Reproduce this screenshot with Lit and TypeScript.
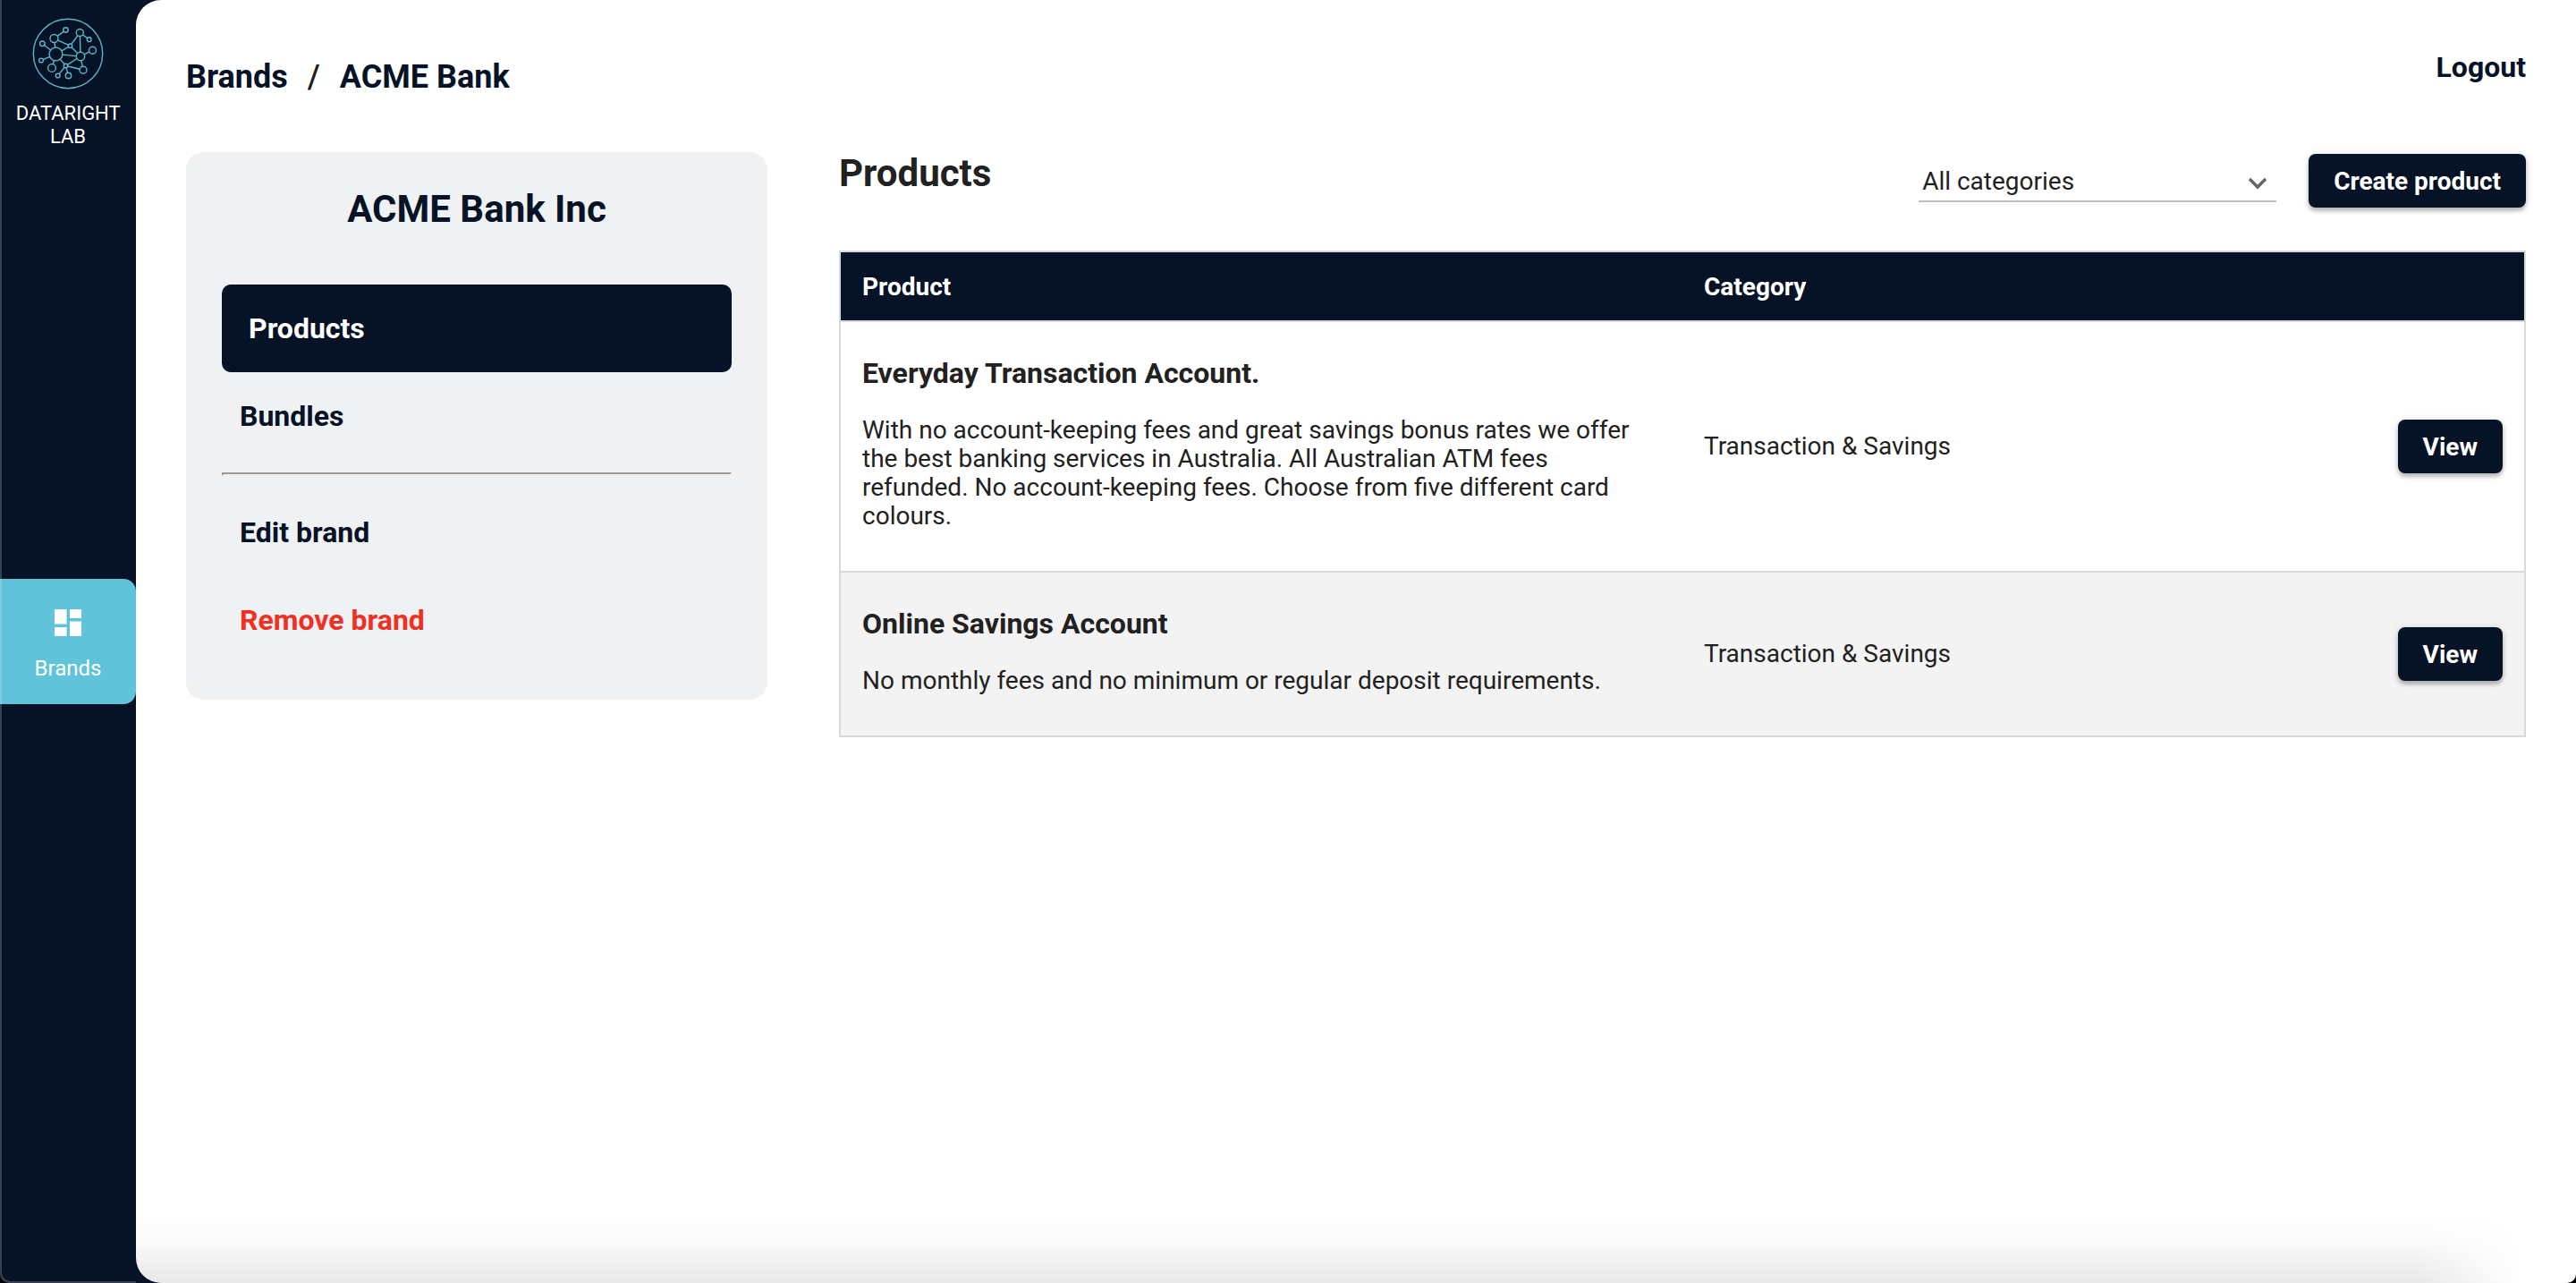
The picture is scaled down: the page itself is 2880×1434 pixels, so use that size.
import { LitElement, html, css, svg } from "lit";
import { customElement, property, state } from "lit/decorators.js";
import { classMap } from "lit/directives/class-map.js";

interface Product {
  name: string;
  description: string;
  category: string;
}

const PRODUCTS: Product[] = [
  {
    name: "Everyday Transaction Account.",
    description:
      "With no account-keeping fees and great savings bonus rates we offer the best banking services in Australia. All Australian ATM fees refunded. No account-keeping fees. Choose from five different card colours.",
    category: "Transaction & Savings",
  },
  {
    name: "Online Savings Account",
    description: "No monthly fees and no minimum or regular deposit requirements.",
    category: "Transaction & Savings",
  },
];

/* Network nodes of the logo: centre x, centre y, radius. */
const NODES: [number, number, number][] = [
  [60.5, 42.5, 4.5],
  [73.5, 33, 2.7],
  [89.3, 36, 4],
  [99.7, 43.7, 2.4],
  [78.5, 50.7, 2.2],
  [47.3, 48.3, 2.8],
  [62.5, 60, 7.4],
  [103.5, 55.7, 4],
  [90, 62.5, 4.7],
  [46, 67, 2.4],
  [58, 75.5, 4.4],
  [73.5, 73, 2.2],
  [93, 77.7, 4],
  [76.5, 84, 3.2],
  [64.7, 84, 2.4],
];

const LINKS: [number, number][] = [
  [0, 1], [0, 4], [0, 6], [2, 3], [2, 4], [2, 8], [4, 6], [4, 8], [5, 6],
  [6, 8], [6, 9], [6, 10], [6, 11], [8, 7], [8, 11], [8, 12], [11, 12],
  [11, 13], [11, 14],
];

/* A link runs from rim to rim, so that the nodes stay hollow. */
const linkLine = ([a, b]: [number, number]) => {
  const [x1, y1, r1] = NODES[a];
  const [x2, y2, r2] = NODES[b];
  const d = Math.hypot(x2 - x1, y2 - y1);
  const ux = (x2 - x1) / d;
  const uy = (y2 - y1) / d;
  return svg`<line x1=${x1 + ux * r1} y1=${y1 + uy * r1} x2=${x2 - ux * r2} y2=${y2 - uy * r2}></line>`;
};

@customElement("side-rail")
class SideRail extends LitElement {
  static styles = css`
    :host {
      display: grid;
      grid-template-rows: 1fr auto 1fr;
      box-sizing: border-box;
      color: #fff;
    }
    .brand {
      display: flex;
      flex-direction: column;
      align-items: center;
      gap: 14px;
      padding-top: 20px;
      font-size: 22px;
      line-height: 26px;
      text-align: center;
      text-transform: uppercase;
    }
    .logo {
      width: 80px;
      height: 80px;
      fill: none;
      stroke: #5cb8ca;
      stroke-width: 1.4;
    }
    .name {
      width: min-content;
    }
    .tile {
      display: flex;
      flex-direction: column;
      align-items: center;
      gap: 16px;
      box-sizing: border-box;
      height: 140px;
      padding-top: 28px;
      border-radius: 0 14px 14px 0;
      background: #5fc4d9;
      box-shadow: inset 2px 0 #82cddb;
      color: #fff;
      font-size: 24px;
      line-height: 28px;
      text-decoration: none;
    }
    .icon {
      width: 42px;
      height: 42px;
      fill: currentColor;
    }
  `;

  render() {
    return html`
      <div class="brand">
        <svg class="logo" viewBox="36 19.5 80 80" aria-hidden="true">
          <circle cx="76" cy="59.5" r="38.7"></circle>
          ${LINKS.map(linkLine)}
          ${NODES.map(([x, y, r]) => svg`<circle cx=${x} cy=${y} r=${r}></circle>`)}
        </svg>
        <span class="name">Dataright Lab</span>
      </div>
      <a class="tile" href="#brands">
        <svg class="icon" viewBox="-6 -6 42 42" aria-hidden="true">
          <path d="M0 0h13.5v16.5H0zM17 0h13v10H17zM17 13.5h13V30H17zM0 20h13.5v10H0z"></path>
        </svg>
        <span>Brands</span>
      </a>
    `;
  }
}

@customElement("brand-menu")
class BrandMenu extends LitElement {
  @property() heading = "";
  @state() private active = "Products";

  static styles = css`
    :host {
      display: block;
      padding: 40px;
      border-radius: 20px;
      background: #eff1f3;
      color: #061226;
    }
    .title {
      margin: 0 0 60px;
      font-size: 42px;
      line-height: 48px;
      text-align: center;
    }
    .item {
      display: block;
      padding: 30px 20px;
      border-radius: 10px;
      color: inherit;
      font-size: 32px;
      font-weight: 700;
      line-height: 38px;
      text-decoration: none;
    }
    .active {
      padding-left: 30px;
      background: #061226;
      color: #fff;
    }
    .danger {
      color: #ee3124;
    }
    .rule {
      margin: 14px 0;
      border: 2px solid;
      border-color: #9a9a9a #eee #eee #9a9a9a;
    }
  `;

  private link(label: string, danger = false) {
    const classes = { item: true, active: this.active === label, danger };
    return html`<a class=${classMap(classes)} href="#" @click=${() => (this.active = label)}>${label}</a>`;
  }

  render() {
    return html`
      <h2 class="title">${this.heading}</h2>
      <nav>
        ${this.link("Products")} ${this.link("Bundles")}
        <hr class="rule" />
        ${this.link("Edit brand")} ${this.link("Remove brand", true)}
      </nav>
    `;
  }
}

@customElement("product-list")
class ProductList extends LitElement {
  @property({ attribute: false }) products: Product[] = [];

  static styles = css`
    :host {
      display: block;
      color: #212121;
      font-size: 28px;
      line-height: 32px;
    }
    .bar {
      display: flex;
      align-items: flex-start;
      gap: 36px;
      padding-top: 2px;
      margin-bottom: 48px;
    }
    .heading {
      flex: 1;
      margin: 0;
      font-size: 42px;
      line-height: 44px;
    }
    .filter {
      display: grid;
      align-items: center;
      width: 400px;
      height: 52px;
      border-bottom: 2px solid #bdbdbd;
    }
    .select {
      grid-area: 1 / 1;
      appearance: none;
      width: 100%;
      height: 52px;
      padding: 10px 48px 0 4px;
      border: 0;
      background: none;
      color: inherit;
      font: inherit;
    }
    .chevron {
      grid-area: 1 / 1;
      justify-self: end;
      width: 24px;
      height: 16px;
      margin: 14px 9px 0 0;
      fill: none;
      stroke: #666;
      stroke-width: 3.4;
      pointer-events: none;
    }
    .button {
      height: 60px;
      padding: 2px 28px 0;
      border: 0;
      border-radius: 8px;
      background: #061226;
      box-shadow: 0 4px 4px rgba(0, 0, 0, 0.22), 0 1px 10px rgba(0, 0, 0, 0.14);
      color: #fff;
      font: inherit;
      font-weight: 700;
    }
    .table {
      width: 100%;
      border: 2px solid #d9d9d9;
      border-spacing: 0;
      table-layout: fixed;
      box-sizing: border-box;
    }
    .half {
      width: 50%;
    }
    .quarter {
      width: 25%;
    }
    .head {
      height: 76px;
      padding: 2px 24px 0;
      background: #061226;
      color: #fff;
      text-align: left;
      box-sizing: border-box;
    }
    .cell {
      padding: 38px 24px 45px;
      border-top: 2px solid #d9d9d9;
      vertical-align: top;
    }
    .middle {
      padding: 0 24px;
      vertical-align: middle;
    }
    .action {
      text-align: right;
    }
    .row:nth-child(even) {
      background: #f3f3f3;
    }
    .name {
      margin: 0 0 29px;
      font-size: 32px;
      line-height: 38px;
    }
    .text {
      margin: 0;
      padding-right: 24px;
    }
  `;

  render() {
    return html`
      <div class="bar">
        <h2 class="heading">Products</h2>
        <div class="filter">
          <select class="select" aria-label="Category">
            <option>All categories</option>
            <option>Transaction &amp; Savings</option>
          </select>
          <svg class="chevron" viewBox="0 0 24 16" aria-hidden="true">
            <path d="M3 3l9 9 9-9"></path>
          </svg>
        </div>
        <button class="button" type="button">Create product</button>
      </div>
      <table class="table">
        <colgroup>
          <col class="half" />
          <col class="quarter" />
          <col class="quarter" />
        </colgroup>
        <thead>
          <tr>
            <th class="head" scope="col">Product</th>
            <th class="head" scope="col">Category</th>
            <td class="head"></td>
          </tr>
        </thead>
        <tbody>
          ${this.products.map(
            (p) => html`
              <tr class="row">
                <td class="cell">
                  <h3 class="name">${p.name}</h3>
                  <p class="text">${p.description}</p>
                </td>
                <td class="cell middle">${p.category}</td>
                <td class="cell middle action">
                  <button class="button" type="button">View</button>
                </td>
              </tr>
            `,
          )}
        </tbody>
      </table>
    `;
  }
}

@customElement("app-root")
class AppRoot extends LitElement {
  static styles = css`
    :host {
      display: block;
      background: #000;
      font-family: Roboto, "Liberation Sans", sans-serif;
    }
    .shell {
      display: grid;
      grid-template-columns: 152px minmax(0, 1fr);
      min-height: 100vh;
      overflow: hidden;
      border-radius: 0 0 10px 10px;
      background: #061226;
      box-sizing: border-box;
    }
    .rail {
      box-shadow: inset 2px -2px #383f50;
      border-bottom-left-radius: 10px;
    }
    .page {
      position: relative;
      padding: 0 56px;
      border-radius: 28px 0 0 28px;
      background: #fff;
      overflow: hidden;
    }
    .shade {
      position: absolute;
      right: 0;
      bottom: 0;
      left: 0;
      height: 80px;
      background: linear-gradient(rgba(0, 0, 0, 0), rgba(0, 0, 0, 0.02) 40%, rgba(0, 0, 0, 0.09));
      mask-image: linear-gradient(to left, transparent 60px, #000 180px);
      pointer-events: none;
    }
    .top {
      display: flex;
      align-items: flex-start;
      justify-content: space-between;
      height: 170px;
      box-sizing: border-box;
      padding-top: 56px;
      color: #061226;
      font-weight: 700;
    }
    .crumbs {
      display: flex;
      gap: 22px;
      padding-top: 8px;
      font-size: 36px;
      line-height: 44px;
    }
    .link {
      color: inherit;
      text-decoration: none;
    }
    .slash {
      color: #212121;
      font-weight: 500;
    }
    .logout {
      font-size: 32px;
      line-height: 38px;
    }
    .columns {
      display: grid;
      grid-template-columns: 650px minmax(0, 1fr);
      align-items: start;
      gap: 80px;
    }
  `;

  render() {
    return html`
      <div class="shell">
        <side-rail class="rail"></side-rail>
        <main class="page">
          <header class="top">
            <nav class="crumbs" aria-label="Breadcrumb">
              <a class="link" href="#brands">Brands</a>
              <span class="slash">/</span>
              <a class="link" href="#acme">ACME Bank</a>
            </nav>
            <a class="link logout" href="#logout">Logout</a>
          </header>
          <div class="columns">
            <brand-menu heading="ACME Bank Inc"></brand-menu>
            <product-list .products=${PRODUCTS}></product-list>
          </div>
          <div class="shade"></div>
        </main>
      </div>
    `;
  }
}
